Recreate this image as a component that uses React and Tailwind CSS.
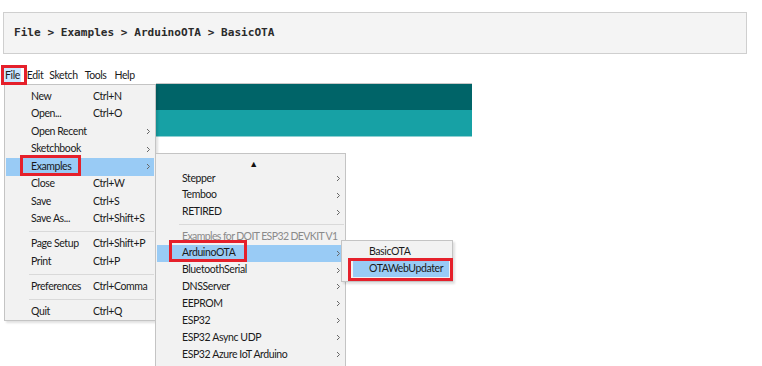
import React from 'react';

const ui = { fontFamily: 'Lato, "Liberation Sans", sans-serif' };

function Chevron() {
  return (
    <svg width="5" height="7" viewBox="0 0 5 7" className="shrink-0">
      <polyline points="1,1 3.5,3.5 1,6" fill="none" stroke="#666" strokeWidth="1" />
    </svg>
  );
}

function Item({ label, shortcut, arrow, active, muted, h = 'h-[17.5px]', pl = 'pl-[26px]', sc = 'w-[62px]' }) {
  return (
    <div className={`flex items-center ${h} ${pl} pr-[3px] ${active ? 'bg-[#99cbf5]' : ''}`}>
      <span className={`${sc} whitespace-nowrap ${muted ? 'text-[#8a8a8a] tracking-[-0.6px]' : 'text-[#1a1a1a]'}`}>{label}</span>
      <span className="flex-1 whitespace-nowrap text-[#1a1a1a]">{shortcut}</span>
      {arrow && <Chevron />}
    </div>
  );
}

function Sep({ ml = 'ml-[23px]' }) {
  return <div className={`h-[7.5px] flex items-center ${ml}`}><div className="h-px w-full bg-[#d9d9d9]" /></div>;
}

export default function App() {
  const fileMenu = [
    ['New', 'Ctrl+N'],
    ['Open...', 'Ctrl+O'],
    ['Open Recent', '', true],
    ['Sketchbook', '', true],
    ['Examples', '', true, true],
    ['Close', 'Ctrl+W'],
    ['Save', 'Ctrl+S'],
    ['Save As...', 'Ctrl+Shift+S'],
    'sep',
    ['Page Setup', 'Ctrl+Shift+P'],
    ['Print', 'Ctrl+P'],
    'sep',
    ['Preferences', 'Ctrl+Comma'],
    'sep',
    ['Quit', 'Ctrl+Q'],
  ];

  const examples = [
    'Stepper', 'Temboo', 'RETIRED', 'sep', 'muted', 'ArduinoOTA', 'BluetoothSerial', 'DNSServer',
    'EEPROM', 'ESP32', 'ESP32 Async UDP', 'ESP32 Azure IoT Arduino',
  ];

  return (
    <div className="relative w-[762px] h-[366px] overflow-hidden bg-white" style={ui}>
      {/* Path box */}
      <div className="ml-[3px] mt-[12px] w-[744px] h-[42px] flex items-center pl-[10px] pt-[1px] bg-[#f4f4f4] border-[1.5px] border-[#cfcfcf]">
        <span className="text-[11.1px] font-bold text-[#2b2b2b] whitespace-pre" style={{ fontFamily: '"DejaVu Sans Mono", "Liberation Mono", monospace' }}>
          File &gt; Examples &gt; ArduinoOTA &gt; BasicOTA
        </span>
      </div>

      {/* Menu bar */}
      <div className="mt-[14px] ml-[4px] h-[15px] flex items-center text-[10.5px] tracking-[-0.4px] text-[#1a1a1a]">
        <span className="px-[1px] h-[15px] flex items-center bg-[#cce8ff]">File</span>
        <span className="ml-[6px]">Edit</span>
        <span className="ml-[6px]">Sketch</span>
        <span className="ml-[7px]">Tools</span>
        <span className="ml-[8px]">Help</span>
      </div>

      {/* IDE toolbar behind menus */}
      <div className="absolute left-[156px] top-[83px] w-[316px] border-t border-[#c8c8c8]">
        <div className="h-[26px] bg-[#006468]" />
        <div className="h-[26px] bg-[#17a1a5]" />
        <div className="h-px bg-[#8fd0d2]" />
      </div>

      {/* File menu */}
      <div className="absolute left-[4px] top-[84px] w-[152px] h-[237px] pt-[3px] px-px bg-[#f2f2f2] border border-[#c4c4c4] text-[10.5px] tracking-[-0.4px] shadow-[2px_2px_2px_rgba(0,0,0,0.12)]">
        {fileMenu.map((it, i) =>
          it === 'sep' ? (
            <Sep key={i} />
          ) : (
            <Item key={i} label={it[0]} shortcut={it[1]} arrow={it[2]} active={it[3]} pl="pl-[25px]" />
          )
        )}
      </div>

      {/* Examples submenu */}
      <div className="absolute left-[155px] top-[153px] w-[191px] h-[230px] px-px bg-[#f2f2f2] border border-[#c4c4c4] text-[10.5px] tracking-[-0.4px]">
        <div className="h-[16px] flex items-center justify-center pl-[6px] pt-[3px] text-[9px] text-[#111]">▲</div>
        {examples.map((e, i) =>
          e === 'sep' ? (
            <Sep key={i} ml="ml-[22px]" />
          ) : e === 'muted' ? (
            <Item key={i} label="Examples for DOIT ESP32 DEVKIT V1" muted h="h-[16.5px]" pl="pl-[25px]" sc="w-auto" />
          ) : (
            <Item key={i} label={e} arrow active={e === 'ArduinoOTA'} h="h-[16.9px]" pl="pl-[25px]" sc="w-auto" />
          )
        )}
      </div>

      {/* ArduinoOTA submenu */}
      <div className="absolute left-[341px] top-[240px] w-[112px] h-[42px] pt-[2px] px-px bg-[#f2f2f2] border border-[#c4c4c4] text-[10.5px] tracking-[-0.4px] shadow-[2px_2px_2px_rgba(0,0,0,0.12)]">
        <Item label="BasicOTA" h="h-[17px]" pl="pl-[26px]" sc="w-auto" />
        <div className="ml-[10px] mr-[2px]">
          <Item label="OTAWebUpdater" active h="h-[17px]" pl="pl-[16px]" sc="w-auto" />
        </div>
      </div>

      {/* Red highlight boxes */}
      <div className="absolute left-[1px] top-[65px] w-[26px] h-[20px] border-[3px] border-[#e5202b]" />
      <div className="absolute left-[20px] top-[155px] w-[61px] h-[21px] border-[3px] border-[#e5202b]" />
      <div className="absolute left-[169px] top-[240px] w-[78px] h-[22px] border-[3px] border-[#e5202b]" />
      <div className="absolute left-[348px] top-[258px] w-[105px] h-[23px] border-[3px] border-[#e5202b]" />
    </div>
  );
}
